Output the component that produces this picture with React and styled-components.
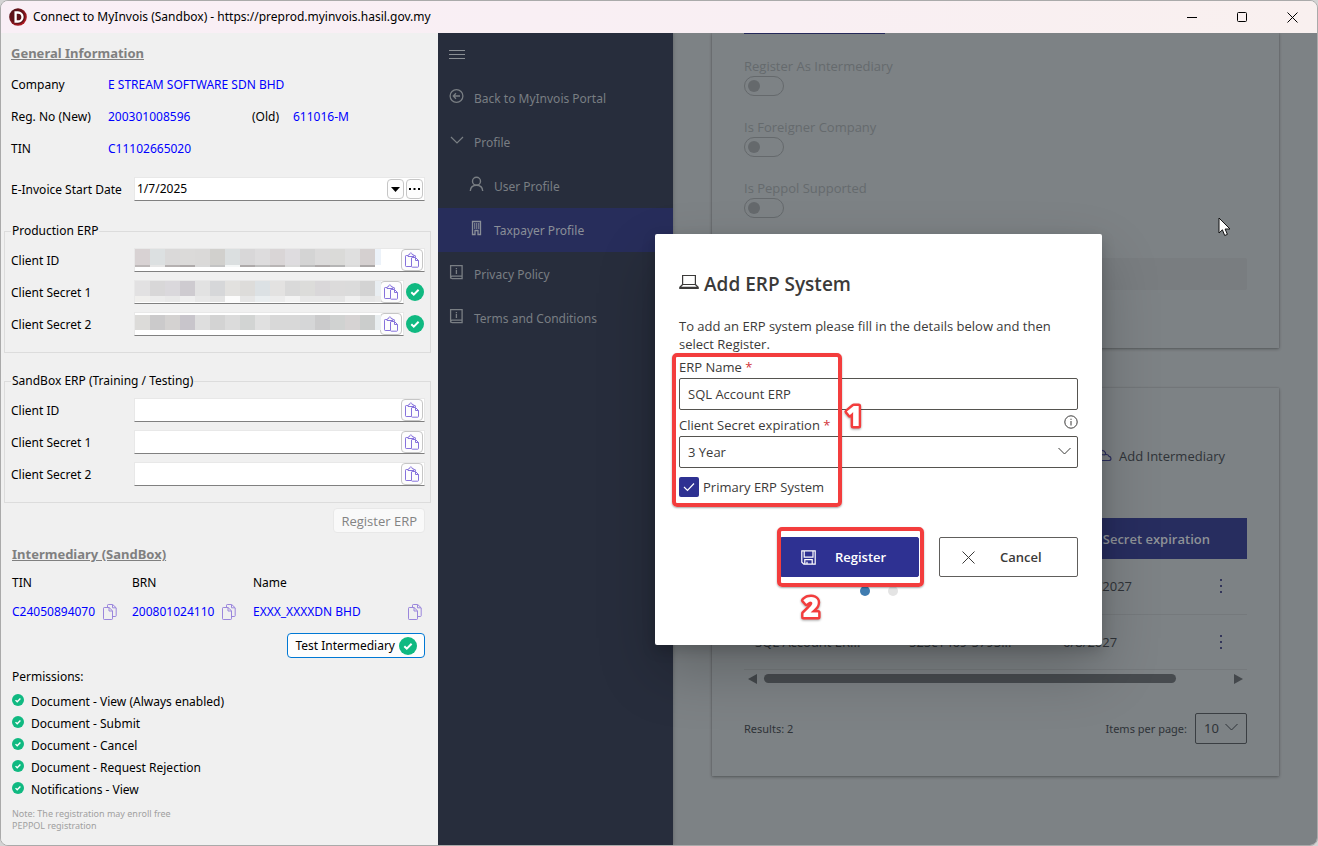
import React from 'react';
import styled, { createGlobalStyle, css } from 'styled-components';

const font = '"Open Sans", "Noto Sans", sans-serif';
const panelFont = '"Noto Sans", "Open Sans", sans-serif';

const GlobalStyle = createGlobalStyle`
  *, *::before, *::after { box-sizing: border-box; }
  body { margin: 0; background: #d4d4d4; font-family: ${font}; font-size: 13px; color: #000; }
  button, input, select { font: inherit; color: inherit; margin: 0; }
  h1, h2, p, ul { margin: 0; padding: 0; }
  svg { display: block; flex: none; }
`;

/* ---------- window ---------- */

const Window = styled.div`
  display: flex;
  flex-direction: column;
  height: 100vh;
  border: 1px solid #aaa;
  border-radius: 8px;
  overflow: hidden;
  background: #f0f0f0;
`;

const TitleBar = styled.header`
  display: flex;
  align-items: center;
  flex: none;
  height: 32px;
  padding-left: 8px;
  background: linear-gradient(90deg, #f9eff6, #f9eff3 60%, #f9f0ef);
`;

const WindowTitle = styled.h1`
  flex: 1;
  margin-left: 6px;
  font-family: ${panelFont};
  font-size: 12px;
  font-weight: 400;
  line-height: 20px;
`;

const CaptionButton = styled.button`
  display: grid;
  place-items: center;
  width: 50px;
  height: 32px;
  padding: 0;
  border: 0;
  background: none;
`;

const Body = styled.div`
  display: flex;
  flex: 1;
  min-height: 0;
`;

/* ---------- settings panel ---------- */

const Panel = styled.aside`
  flex: none;
  width: 437px;
  padding: 10px 7px 0 3px;
  background: #f0f0f0;
  font-family: ${panelFont};
  font-size: 12px;
  line-height: 20px;
  overflow: hidden;
`;

const Section = styled.section`
  padding: 0 6px 0 ${(p) => (p.$inset ? 8 : 7)}px;
`;

const PanelHeading = styled.h2`
  font-size: 13px;
  font-weight: 700;
  line-height: 20px;
  color: #808080;
  text-decoration: underline;
`;

const InfoList = styled.div`
  padding-top: 6px;
`;

const InfoRow = styled.div`
  display: grid;
  grid-template-columns: 97px 144px 41px 1fr;
  align-items: center;
  height: 32px;
`;

const Value = styled.span`
  color: #0000ff;
  white-space: nowrap;
`;

const FieldRow = styled.div`
  display: grid;
  grid-template-columns: 123px 1fr auto;
  align-items: center;
  margin-top: ${(p) => p.$gap}px;
  label { padding-top: 2px; }
`;

const FieldBox = styled.div`
  position: relative;
  display: flex;
  align-items: center;
  height: 24px;
  padding-right: 1px;
  gap: 2px;
  background: #fff;
  border: 1px solid #e8e8e8;
  border-bottom-color: #808080;
`;

const FieldInput = styled.input`
  flex: 1;
  min-width: 0;
  height: 20px;
  padding: 0 2px;
  border: 0;
  outline: 0;
  background: transparent;
`;

const SmallButton = styled.button`
  display: grid;
  place-items: center;
  flex: none;
  width: ${(p) => (p.$wide ? 22 : 17)}px;
  height: ${(p) => (p.$wide ? 22 : 20)}px;
  padding: 0;
  background: #fdfdfd;
  border: 1px solid #c6c6c6;
  border-radius: 4px;
`;

const Status = styled.span`
  padding: 0 1px 0 2px;
`;

const Redaction = styled.span`
  position: absolute;
  left: 0;
  top: 0;
`;

const RedactionLine = styled.span`
  display: flex;
  height: ${(p) => p.$height}px;
`;

const Block = styled.i`
  width: 15px;
  background: ${(p) => p.$tone};
  &:nth-child(17) { width: 6px; }
`;

const Group = styled.fieldset`
  margin: ${(p) => p.$top}px 0 0;
  padding: 0 5px 16px 6px;
  border: 1px solid #dcdcdc;
`;

const Legend = styled.legend`
  padding: 0 1px;
`;

const GroupRows = styled.div`
  display: grid;
  gap: 8px;
  padding-top: 7px;
`;

const Actions = styled.div`
  display: flex;
  justify-content: flex-end;
  margin: ${(p) => p.$margin};
`;

const PanelButton = styled.button`
  display: flex;
  align-items: center;
  justify-content: center;
  gap: 4px;
  height: 25px;
  padding: 0 7px;
  border-radius: 4px;
  background: #fdfdfd;
  border: 1px solid #0078d4;
  &:disabled {
    background: #f9f9f9;
    border-color: #e8e8e8;
    color: #838383;
    font-family: ${font};
    font-size: 13px;
  }
`;

const PartyTable = styled.table`
  width: 100%;
  margin-top: 9px;
  border-collapse: collapse;
  table-layout: fixed;
  th, td { padding: 0 0 9px; font-weight: 400; text-align: left; }
  td { padding: 0; }
  th:nth-child(1) { width: 120px; }
  th:nth-child(2) { width: 121px; }
`;

const Party = styled.div`
  display: flex;
  align-items: center;
  justify-content: ${(p) => (p.$spread ? 'space-between' : 'flex-start')};
  gap: 8px;
  padding-right: 3px;
  color: #0000ff;
`;

const IconButton = styled.button`
  display: block;
  padding: 0;
  border: 0;
  background: none;
`;

const Permissions = styled.ul`
  margin-top: 4px;
  list-style: none;
  line-height: 22px;
`;

const Permission = styled.li`
  display: flex;
  gap: 7px;
  svg { margin-top: 3px; }
`;

const Note = styled.p`
  width: 180px;
  margin-top: 7px;
  font-size: 9px;
  line-height: 12px;
  color: #a0a0a0;
`;

/* ---------- portal ---------- */

const Portal = styled.div`
  position: relative;
  display: flex;
  flex: 1;
  min-width: 0;
  overflow: hidden;
  background: #7d8285;
  font-size: 13px;
`;

const SideNav = styled.nav`
  flex: none;
  width: 235px;
  background: #272d3c;
  color: #797e83;
  font-family: ${panelFont};
  font-size: 12px;
  box-shadow: 0 0 4px rgba(0, 0, 0, 0.25);
`;

const MenuButton = styled.button`
  display: block;
  height: 43px;
  padding: 0 11px;
  border: 0;
  background: none;
`;

const NavLink = styled.a`
  display: flex;
  align-items: center;
  gap: 9px;
  height: 44px;
  padding-left: ${(p) => (p.$nested ? 31 : 11)}px;
  color: inherit;
  text-decoration: none;
  svg { margin-top: -4px; }
  ${(p) => p.$active && css`background: #272d5b; color: #8a8f98;`}
`;

const Main = styled.main`
  flex: 1;
  min-width: 0;
  padding: 0 38px 0 39px;
  color: #2f3338;
`;

const Card = styled.section`
  padding: 0 32px;
  background: #7d8285;
  box-shadow: 0 1px 3px rgba(0, 0, 0, 0.32), 0 0 1px rgba(0, 0, 0, 0.2);
`;

const ProfileCard = styled(Card)`
  height: 315px;
`;

const TabMark = styled.div`
  width: 141px;
  height: 1px;
  margin-bottom: 22px;
  background: #25295a;
`;

const ToggleField = styled.label`
  display: block;
  height: 61px;
  line-height: 20px;
  color: #656a6d;
`;

const Toggle = styled.input`
  appearance: none;
  display: grid;
  align-items: center;
  width: 40px;
  height: 20px;
  border: 1px solid #65696c;
  border-radius: 10px;
  &::before {
    content: '';
    width: 12px;
    height: 12px;
    margin-left: 3px;
    border-radius: 6px;
    background: #65696c;
  }
`;

const DisabledInput = styled.input`
  display: block;
  width: 100%;
  height: 32px;
  margin-top: 19px;
  border: 0;
  border-radius: 2px;
  background: #797d80;
`;

const ErpCard = styled(Card)`
  height: 388px;
  margin-top: 40px;
  padding-top: 54px;
`;

const CardTools = styled.div`
  display: flex;
  justify-content: flex-end;
  padding-right: 22px;
`;

const ToolButton = styled.button`
  display: flex;
  align-items: center;
  gap: 7px;
  height: 28px;
  padding: 0;
  border: 0;
  background: none;
`;

const ErpTable = styled.table`
  width: 100%;
  margin-top: 48px;
  border-collapse: collapse;
  table-layout: fixed;
  th { height: 41px; background: #272d5f; color: #8e9297; font-weight: 600; }
  th, td { padding: 0 0 0 11px; text-align: left; white-space: nowrap; }
  td { height: 55px; border-bottom: 1px solid #75797c; }
  th:nth-child(1), th:nth-child(2) { width: 154px; }
  th:nth-child(4) { width: 38px; }
`;

const Scroller = styled.div`
  display: flex;
  align-items: center;
  gap: 7px;
  height: 18px;
  padding: 0 4px;
`;

const ScrollTrack = styled.div`
  flex: 1;
`;

const ScrollThumb = styled.div`
  width: 89%;
  height: 9px;
  border-radius: 5px;
  background: #474b4f;
`;

const Pager = styled.div`
  display: flex;
  align-items: center;
  justify-content: space-between;
  margin-top: 25px;
  font-family: ${panelFont};
  font-size: 11px;
`;

const PageSize = styled.label`
  display: flex;
  align-items: center;
  gap: 8px;
`;

const SelectWrap = styled.span`
  position: relative;
  display: block;
  svg { position: absolute; right: ${(p) => p.$inset}px; top: 50%; margin-top: -5px; pointer-events: none; }
`;

const PageSelect = styled.select`
  appearance: none;
  display: block;
  width: 52px;
  height: 31px;
  padding: 0 8px;
  border: 1px solid #3a3e42;
  border-radius: 2px;
  background: transparent;
  font-size: 13px;
`;

const Pointer = styled.div`
  position: absolute;
  top: 184px;
  right: 86px;
`;

/* ---------- dialog ---------- */

const Overlay = styled.div`
  position: absolute;
  inset: 0;
  display: grid;
  place-items: center;
  padding: 1px 0 0 2px;
`;

const Dialog = styled.form`
  width: 447px;
  padding: 38px 24px 49px;
  border-radius: 2px;
  background: #fff;
  color: #3b3a39;
  box-shadow: 0 26px 58px rgba(0, 0, 0, 0.22), 0 5px 14px rgba(0, 0, 0, 0.18);
`;

const DialogTitle = styled.h2`
  display: flex;
  align-items: center;
  gap: 5px;
  font-size: 19px;
  font-weight: 600;
  line-height: 24px;
  svg { margin-top: -4px; }
`;

const DialogText = styled.p`
  margin-top: 21px;
  line-height: 18px;
`;

const Fields = styled.div`
  position: relative;
  padding-top: 4px;
`;

const FieldLabel = styled.label`
  display: block;
  line-height: 20px;
  b { color: #d13438; font-weight: 400; }
`;

const LabelLine = styled.div`
  display: flex;
  justify-content: space-between;
  padding: 5px 0 1px;
`;

const control = css`
  display: block;
  width: 100%;
  height: 32px;
  padding: 0 8px;
  border: 1px solid #55534f;
  border-radius: 2px;
  background: #fff;
  outline: 0;
`;

const TextInput = styled.input`
  ${control}
  margin-top: 1px;
`;

const DialogSelect = styled.select`
  ${control}
  appearance: none;
`;

const CheckLabel = styled.label`
  display: flex;
  align-items: center;
  gap: 4px;
  height: 20px;
  margin-top: 9px;
`;

const CheckWrap = styled.span`
  display: grid;
  svg, input { grid-area: 1 / 1; }
  svg { pointer-events: none; place-self: center; }
`;

const Check = styled.input`
  appearance: none;
  width: 20px;
  height: 20px;
  border-radius: 2px;
  background: #2e3192;
`;

const DialogActions = styled.div`
  display: grid;
  grid-template-columns: 139px 139px;
  justify-content: end;
  gap: 20px;
  margin-top: 40px;
`;

const ButtonSlot = styled.div`
  position: relative;
`;

const DialogButton = styled.button`
  display: flex;
  align-items: center;
  gap: ${(p) => (p.$primary ? 19 : 25)}px;
  width: 100%;
  height: 40px;
  padding: 0 ${(p) => (p.$primary ? 20 : 22)}px;
  border-radius: 2px;
  border: 1px solid ${(p) => (p.$primary ? '#2e3192' : '#605e5c')};
  background: ${(p) => (p.$primary ? '#2e3192' : '#fff')};
  color: ${(p) => (p.$primary ? '#fff' : '#3b3a39')};
  font-weight: 600;
`;

const Dots = styled.div`
  display: flex;
  gap: 18px;
  margin: 9px 0 0 181px;
`;

const Dot = styled.span`
  width: 10px;
  height: 10px;
  border-radius: 5px;
  background: ${(p) => (p.$on ? '#3f7cb0' : '#e4e4e4')};
`;

const Marker = styled.div`
  position: absolute;
  inset: ${(p) => p.$inset};
  border: 4px solid #f33d3d;
  border-radius: 5px;
  box-shadow: 0 1px 2px rgba(0, 0, 0, 0.35);
  pointer-events: none;
`;

const StepNumber = styled.svg`
  position: absolute;
  left: ${(p) => p.$left}px;
  top: ${(p) => p.$top}px;
  overflow: visible;
  pointer-events: none;
  filter: drop-shadow(0 1px 1px rgba(0, 0, 0, 0.35));
  text {
    font: 800 28px ${font};
    text-anchor: middle;
    fill: #fff;
    stroke: #f33d3d;
    stroke-width: 5px;
    stroke-linejoin: round;
    paint-order: stroke fill;
  }
`;

/* ---------- icons ---------- */

const Icon = ({ w = 16, h = w, box = `0 0 ${w} ${h}`, stroke = 'currentColor', sw = 1, children }) => (
  <svg width={w} height={h} viewBox={box} fill="none" stroke={stroke} strokeWidth={sw} aria-hidden="true">
    {children}
  </svg>
);

const AppIcon = () => (
  <svg width="18" height="18" viewBox="0 0 18 18" aria-hidden="true">
    <defs>
      <linearGradient id="ring" x1="0" y1="0" x2="1" y2="1">
        <stop offset="0" stopColor="#3d0d12" />
        <stop offset="1" stopColor="#c41c26" />
      </linearGradient>
    </defs>
    <circle cx="9" cy="9" r="8.8" fill="url(#ring)" />
    <circle cx="9" cy="9" r="7" fill="#5c1218" />
    <path d="M6.600 4.500h2.400a4.500 4.500 0 0 1 0 9H6.600z" fill="none" stroke="#fff" strokeWidth="2.3" />
  </svg>
);

const PasteIcon = () => (
  <Icon w={16} stroke="#8672dc">
    <path d="M4 3.500H2.200a.7.7 0 0 0-.7.7v9.600c0 .4.3.700.7.700h5M11.500 5V4.200a.7.7 0 0 0-.7-.7H10" />
    <path d="M4 4.500V3.200l1.700-.8C5.900 1.300 6.200.8 6.800.8s1 .5 1.200 1.600l2 .8v1.300z" />
    <path d="M7.500 6v8.500c0 .4.3.700.7.700h5.600c.4 0 .7-.3.7-.7V8.500l-3-3h-3.300a.7.7 0 0 0-.7.5zM11.500 5.500v3h3" />
  </Icon>
);

const CopyIcon = () => (
  <Icon w={14} h={16} stroke="#9a86dc">
    <path d="M4.500 3V1.200c0-.4.3-.7.7-.7h4.500l3.500 3.300v8c0 .4-.3.700-.7.700h-2.500M9.500.8v3h3.500" />
    <path d="M1.200 3.500h4.800l3.500 3.300v8c0 .4-.3.700-.7.700H1.200c-.4 0-.7-.3-.7-.7V4.200c0-.4.3-.7.7-.7zM6 3.500V7h3.500" />
  </Icon>
);

const OkIcon = ({ size = 18 }) => (
  <svg width={size} height={size} viewBox="0 0 18 18" aria-hidden="true">
    <circle cx="9" cy="9" r="9" fill="#10b981" />
    <path d="M5.300 9.200l2.500 2.500 4.800-4.900" fill="none" stroke="#fff" strokeWidth="2" />
  </svg>
);

const ChevronIcon = ({ w = 13, sw = 1 }) => (
  <Icon w={w} h={8} box="0 0 13 8" sw={sw}><path d="M.5 1l6 6 6-6" /></Icon>
);

const BookIcon = () => (
  <Icon w={16} sw={1.300}>
    <path d="M1.600 14.400V1.600h11.500v10.500H3.200c-2 0-2 2.500 0 2.500h9.900V12" />
    <path d="M7.400 4v1.200M7.400 6v4" />
  </Icon>
);

const navItems = [
  {
    text: 'Back to MyInvois Portal',
    icon: <Icon w={16} sw={1.3}><circle cx="7.500" cy="8" r="6.400" /><path d="M11 8H4.500M7 5.200L4.300 8 7 10.800" /></Icon>,
  },
  { text: 'Profile', icon: <ChevronIcon w={16} sw={1.2} /> },
  {
    text: 'User Profile',
    nested: true,
    icon: <Icon w={16} sw={1.400}><circle cx="7.500" cy="5.300" r="4" /><path d="M1.300 15c.3-3.600 2.700-5.700 6.200-5.700s5.900 2.100 6.200 5.700" /></Icon>,
  },
  {
    text: 'Taxpayer Profile',
    nested: true,
    active: true,
    icon: (
      <Icon w={16} sw={1.300}>
        <path d="M3.500 1.500h8v13h-2.500v-4h-3v4H3.500zM5 4h1.300M7 4h1.300M9 4h1.300M5 6h1.300M7 6h1.300M9 6h1.300M5 8h1.300M7 8h1.300M9 8h1.300" />
      </Icon>
    ),
  },
  { text: 'Privacy Policy', icon: <BookIcon /> },
  { text: 'Terms and Conditions', icon: <BookIcon /> },
];

/* ---------- parts ---------- */

const redactions = {
  id: [
    [16, '#d8d2d3 #dce0e1 #dad9d9 #dbdad9 #dad9d8 #d1d0cd #dbdfe0 #d8d7d8 #dddcdd #d9d5d6 #dedcdf #d4d4d4 #dbdada #dadad8 #dfdfdf #d5d0d0 #ecf2f9'],
    [2, '#bdb8b8 #e6e6e6 #b5b1b1 #aeaaaa #d9d9d9 #c3c3c3 #f4f6f6 #aeaaaa #bfbfbf #b9b5b5 #d9d9d9 #bcbcbc #aeaaaa #b5b5b5 #dadada #aca8a8'],
  ],
  secret1: [
    [15, '#e2e1e2 #d8d7d8 #dad8dc #cecbd0 #e2e2e2 #d6d7d9 #e2e1df #dddcda #dce1e4 #e3e2e1 #d9d9d9 #dcdcda #d9d7d9 #dcdbdb #dbdbdb #d3d3d3 #e9eef2'],
    [6, '#f0efed #ececec #e9e9e9 #efefef #e8e8e8 #e4e4e4 #fcfcfc #e6e6e6 #eaeef0 #ececec #f3f3f3 #e8e8e8 #e8e8e8 #e5e5e5 #f0f0f0 #e6e6e6 #e9e9e9'],
  ],
  secret2: [
    [2, '#fff'],
    [15, '#dcdbd9 #cbcacb #d4d2d1 #c8c5cb #dedede #d3d3d3 #dbdbdb #d2d4d3 #e0e0e0 #d8d8d8 #d8d8d8 #d5d6d7 #cbcbcc #d0d2d1 #d6d3d3 #cbcdcc #e9eef0'],
  ],
};

const SecretField = ({ id, label, redact, ok }) => (
  <FieldRow $gap={0}>
    <label htmlFor={id}>{label}</label>
    <FieldBox>
      <FieldInput id={id} type="text" />
      {redact && (
        <Redaction>
          {redact.map(([height, tones], line) => (
            <RedactionLine key={line} $height={height}>
              {tones.split(' ').map((tone, i) => <Block key={i} $tone={tone} />)}
            </RedactionLine>
          ))}
        </Redaction>
      )}
      <SmallButton type="button" $wide aria-label="Paste"><PasteIcon /></SmallButton>
    </FieldBox>
    {ok && <Status><OkIcon /></Status>}
  </FieldRow>
);

const permissions = [
  'Document - View (Always enabled)',
  'Document - Submit',
  'Document - Cancel',
  'Document - Request Rejection',
  'Notifications - View',
];

const parties = ['C24050894070', '200801024110', 'EXXX_XXXXDN BHD'];

const SettingsPanel = () => (
  <Panel>
    <Section>
      <PanelHeading>General Information</PanelHeading>
      <InfoList>
        <InfoRow><span>Company</span><Value>E STREAM SOFTWARE SDN BHD</Value></InfoRow>
        <InfoRow><span>Reg. No (New)</span><Value>200301008596</Value><span>(Old)</span><Value>611016-M</Value></InfoRow>
        <InfoRow><span>TIN</span><Value>C11102665020</Value></InfoRow>
      </InfoList>
      <FieldRow $gap={12}>
        <label htmlFor="start">E-Invoice Start Date</label>
        <FieldBox>
          <FieldInput id="start" type="text" defaultValue="1/7/2025" />
          <SmallButton type="button" aria-label="Open calendar">
            <svg width="9" height="5" viewBox="0 0 9 5" aria-hidden="true"><path d="M0 0h9L4.500 5z" /></svg>
          </SmallButton>
          <SmallButton type="button" aria-label="More">
            <svg width="11" height="2" viewBox="0 0 11 2" aria-hidden="true"><path d="M0 0h2v2H0zM4.500 0h2v2h-2zM9 0h2v2H9z" /></svg>
          </SmallButton>
        </FieldBox>
      </FieldRow>
    </Section>

    <Group $top={20}>
      <Legend>Production ERP</Legend>
      <GroupRows>
        <SecretField id="prod-id" label="Client ID" redact={redactions.id} />
        <SecretField id="prod-secret-1" label="Client Secret 1" redact={redactions.secret1} ok />
        <SecretField id="prod-secret-2" label="Client Secret 2" redact={redactions.secret2} ok />
      </GroupRows>
    </Group>

    <Group $top={18}>
      <Legend>SandBox ERP (Training / Testing)</Legend>
      <GroupRows>
        <SecretField id="sand-id" label="Client ID" />
        <SecretField id="sand-secret-1" label="Client Secret 1" />
        <SecretField id="sand-secret-2" label="Client Secret 2" />
      </GroupRows>
    </Group>

    <Section $inset>
      <Actions $margin="5px 0 11px"><PanelButton type="button" disabled>Register ERP</PanelButton></Actions>
      <PanelHeading>Intermediary (SandBox)</PanelHeading>
      <PartyTable>
        <thead><tr><th>TIN</th><th>BRN</th><th>Name</th></tr></thead>
        <tbody>
          <tr>
            {parties.map((text, i) => (
              <td key={text}>
                <Party $spread={i === 2}>
                  {text}
                  <IconButton type="button" aria-label="Copy"><CopyIcon /></IconButton>
                </Party>
              </td>
            ))}
          </tr>
        </tbody>
      </PartyTable>
      <Actions $margin="11px 0 9px"><PanelButton type="button">Test Intermediary<OkIcon /></PanelButton></Actions>
      <p>Permissions:</p>
      <Permissions>
        {permissions.map((text) => <Permission key={text}><OkIcon size={12} />{text}</Permission>)}
      </Permissions>
      <Note>Note: The registration may enroll free PEPPOL registration</Note>
    </Section>
  </Panel>
);

const KebabIcon = () => (
  <svg width="2" height="14" viewBox="0 0 2 14" fill="#33365a" aria-hidden="true">
    <path d="M0 0h2v2H0zM0 6h2v2H0zM0 12h2v2H0z" />
  </svg>
);

const Step = ({ n, left, top }) => (
  <StepNumber width="40" height="50" viewBox="0 0 40 50" $left={left} $top={top}>
    <text x="20" y="35">{n}</text>
  </StepNumber>
);

const AddErpDialog = () => (
  <Overlay>
    <Dialog>
      <DialogTitle>
        <Icon w={20} h={16} sw={1.200}><path d="M3.600 1.500h12.800v9H3.600zM3.600 10.500L.8 13.300v1.200h18.400v-1.200l-2.800-2.800M.8 13.300h18.400" /></Icon>
        Add ERP System
      </DialogTitle>
      <DialogText>To add an ERP system please fill in the details below and then select Register.</DialogText>
      <Fields>
        <FieldLabel htmlFor="erp-name">ERP Name <b>*</b></FieldLabel>
        <TextInput id="erp-name" type="text" defaultValue="SQL Account ERP" />
        <LabelLine>
          <FieldLabel htmlFor="expiry">Client Secret expiration <b>*</b></FieldLabel>
          <Icon w={14}><circle cx="7" cy="7" r="6.200" /><path d="M7 6v4.500M7 3.700v1.200" /></Icon>
        </LabelLine>
        <SelectWrap $inset={7}>
          <DialogSelect id="expiry" defaultValue="3"><option value="3">3 Year</option></DialogSelect>
          <ChevronIcon />
        </SelectWrap>
        <CheckLabel>
          <CheckWrap>
            <Check type="checkbox" defaultChecked />
            <Icon w={12} h={10} stroke="#fff" sw={1.200}><path d="M1 5l3.500 3.500L11 1.500" /></Icon>
          </CheckWrap>
          Primary ERP System
        </CheckLabel>
        <Marker $inset="0 236px -10px -7px" />
        <Step n="1" left={155} top={38} />
      </Fields>
      <DialogActions>
        <ButtonSlot>
          <DialogButton type="button" $primary>
            <Icon w={15} sw={1.200}><path d="M.8.8h13.400v13.400H2.800l-2-2zM3.200.8v6.400h8.800V.8M3.800 14v-4.400h7.400V14M6 14v-2.300" /></Icon>
            Register
          </DialogButton>
          <Marker $inset="-10px -5px -10px -3px" />
          <Step n="2" left={11} top={45} />
        </ButtonSlot>
        <DialogButton type="button">
          <Icon w={13}><path d="M.5.5l12 12M12.500.5l-12 12" /></Icon>
          Cancel
        </DialogButton>
      </DialogActions>
      <Dots><Dot $on /><Dot /></Dots>
    </Dialog>
  </Overlay>
);

export default function App() {
  return (
    <Window>
      <GlobalStyle />
      <TitleBar>
        <AppIcon />
        <WindowTitle>Connect to MyInvois (Sandbox) - https://preprod.myinvois.hasil.gov.my</WindowTitle>
        <CaptionButton aria-label="Minimize"><Icon w={11}><path d="M0 5.500h10" /></Icon></CaptionButton>
        <CaptionButton aria-label="Maximize"><Icon w={11}><rect x=".5" y=".5" width="9" height="9" rx="1" /></Icon></CaptionButton>
        <CaptionButton aria-label="Close"><Icon w={11}><path d="M.5.5l10 10M10.500.5l-10 10" /></Icon></CaptionButton>
      </TitleBar>
      <Body>
        <SettingsPanel />
        <Portal>
          <SideNav>
            <MenuButton type="button" aria-label="Menu">
              <Icon w={16} h={10} stroke="#8a8f94"><path d="M0 .5h16M0 4.500h16M0 8.500h16" /></Icon>
            </MenuButton>
            {navItems.map((item) => (
              <NavLink key={item.text} href="#" $nested={item.nested} $active={item.active}>
                {item.icon}
                {item.text}
              </NavLink>
            ))}
          </SideNav>
          <Main>
            <ProfileCard>
              <TabMark />
              {['Register As Intermediary', 'Is Foreigner Company', 'Is Peppol Supported'].map((text) => (
                <ToggleField key={text}>
                  {text}
                  <Toggle type="checkbox" role="switch" disabled />
                </ToggleField>
              ))}
              <DisabledInput disabled aria-label="Profile value" />
            </ProfileCard>
            <ErpCard>
              <CardTools>
                <ToolButton type="button">
                  <Icon w={15} h={14} stroke="#2d3060" sw={1.200}>
                    <path d="M1 2.500C3 .8 7 .8 8.300 3.500c.5 1 .3 2-.5 2.300-1 .4-2-.5-4-.2M2 11.500h10c2.600 0 2.600-4 0-4.200-.8-1.500-2.400-2-3.600-1.600" />
                  </Icon>
                  Add Intermediary
                </ToolButton>
              </CardTools>
              <ErpTable>
                <thead><tr><th /><th /><th>Client Secret expiration</th><th /></tr></thead>
                <tbody>
                  <tr><td /><td /><td>10/10/2027</td><td><IconButton type="button" aria-label="Options"><KebabIcon /></IconButton></td></tr>
                  <tr><td>SQL Account ER...</td><td>525c1469-5795...</td><td>6/8/2027</td><td><IconButton type="button" aria-label="Options"><KebabIcon /></IconButton></td></tr>
                </tbody>
              </ErpTable>
              <Scroller>
                <svg width="9" height="10" viewBox="0 0 9 10" fill="#44484c" aria-hidden="true"><path d="M9 0v10L0 5z" /></svg>
                <ScrollTrack><ScrollThumb /></ScrollTrack>
                <svg width="9" height="10" viewBox="0 0 9 10" fill="#44484c" aria-hidden="true"><path d="M0 0v10l9-5z" /></svg>
              </Scroller>
              <Pager>
                <span>Results: 2</span>
                <PageSize>
                  Items per page:
                  <SelectWrap $inset={9}>
                    <PageSelect defaultValue="10"><option>10</option></PageSelect>
                    <ChevronIcon />
                  </SelectWrap>
                </PageSize>
              </Pager>
            </ErpCard>
          </Main>
          <AddErpDialog />
          <Pointer>
            <svg width="13" height="20" viewBox="0 0 13 20" aria-hidden="true">
              <path d="M1 1v15l3.400-3.200 2.300 5.700 2.700-1.100L7.100 12H12z" fill="#fff" stroke="#111" />
            </svg>
          </Pointer>
        </Portal>
      </Body>
    </Window>
  );
}
